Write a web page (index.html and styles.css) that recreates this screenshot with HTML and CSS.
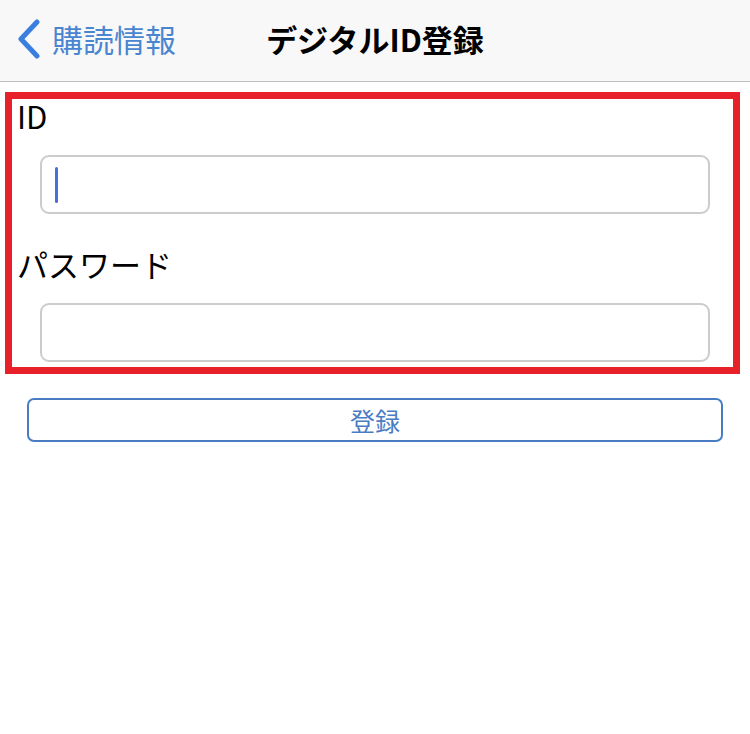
FILE: index.html
```html
<!DOCTYPE html>
<html lang="ja">
<head>
    <meta charset="UTF-8">
    <meta name="viewport" content="width=device-width, initial-scale=1.0">
    <title>デジタルID登録</title>
    <link rel="stylesheet" href="styles.css">
</head>
<body>
    <div class="navbar">
        <a class="back" href="#">
            <svg class="chevron" width="24" height="40" viewBox="0 0 24 40">
                <path d="M20 3 L4 20 L20 37" fill="none" stroke="#3a7fe0" stroke-width="5" stroke-linecap="round" stroke-linejoin="round"/>
            </svg>
            <span>購読情報</span>
        </a>
        <div class="title">デジタルID登録</div>
        <div></div>
    </div>

    <div class="form-box">
        <div class="label">ID</div>
        <div class="field"><span class="caret"></span></div>
        <div class="label label-pass">パスワード</div>
        <div class="field"></div>
    </div>

    <button class="btn">登録</button>
</body>
</html>
```

FILE: styles.css
```css
body {
    font-family: "Noto Sans CJK JP", "Noto Sans", sans-serif;
    margin: 0;
    padding: 0;
    background-color: #ffffff;
    color: #000;
}
.navbar {
    display: grid;
    grid-template-columns: 1fr auto 1fr;
    align-items: center;
    height: 81px;
    background-color: #f8f8f8;
    border-bottom: 1px solid #bdbdbd;
}
.back {
    display: flex;
    align-items: center;
    gap: 11px;
    padding-left: 17px;
    color: #4a86d0;
    text-decoration: none;
    font-size: 31px;
    height: 81px;
}
.back span {
    line-height: 1;
    margin-top: -4px;
}
.chevron {
    display: block;
    margin-top: -4px;
}
.title {
    font-size: 31px;
    font-weight: bold;
    line-height: 1;
    margin-top: -5px;
}
.form-box {
    margin: 10px 10px 0 5px;
    border: 7px solid #e8202a;
    padding: 0 23px 5px 5px;
}
.label {
    font-size: 31px;
    line-height: 34px;
}
.label-pass {
    margin-top: 33px;
}
.field {
    display: flex;
    align-items: center;
    height: 55px;
    margin: 22px 0 0 23px;
    border: 2px solid #cccccc;
    border-radius: 9px;
    background: #fff;
}
.caret {
    width: 3px;
    height: 36px;
    margin-left: 13px;
    border-radius: 2px;
    background-color: #4a6fd8;
}
.btn {
    display: block;
    width: 696px;
    height: 44px;
    margin: 24px 0 0 27px;
    background: #fff;
    border: 2px solid #4a7cc4;
    border-radius: 7px;
    color: #4a7cc4;
    font-family: "Noto Sans CJK JP", sans-serif;
    font-size: 25px;
    line-height: 1;
    padding: 0;
}
```
